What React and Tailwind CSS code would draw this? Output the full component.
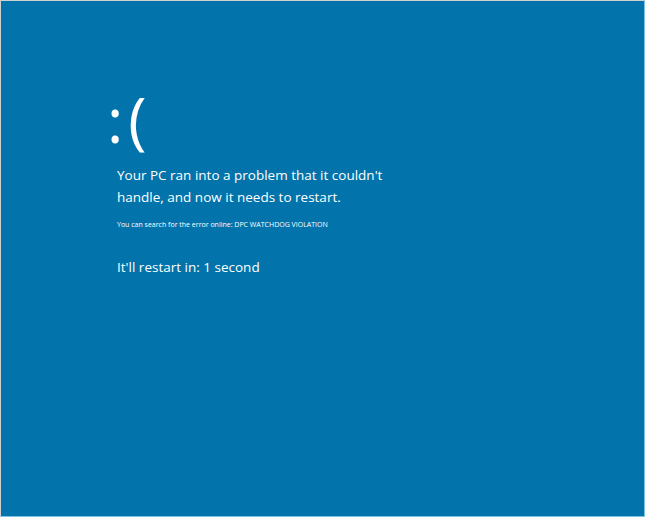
export default function App() {
  return (
    <div className="w-[645px] h-[517px] bg-[#0273ab] border-r border-b border-r-[#7cc3e6] border-b-[#7cc3e6] border-t border-l border-t-[#d0d0d0] border-l-[#d0d0d0] text-white font-['Open_Sans',sans-serif] overflow-hidden">
      <div className="pl-[106px] pt-[80px] flex flex-col">
        <div className="text-[62px] font-normal leading-[76px] tracking-[5px]">:(</div>
        <div className="pl-[10px] mt-[7px] text-[13.5px] leading-[22px] font-normal">
          <p>Your PC ran into a problem that it couldn't</p>
          <p>handle, and now it needs to restart.</p>
        </div>
        <p className="pl-[10px] mt-[12px] text-[7px] leading-[10px]">You can search for the error online: DPC WATCHDOG VIOLATION</p>
        <p className="pl-[10px] mt-[26px] text-[13.5px] leading-[22px]">It'll restart in: 1 second</p>
      </div>
    </div>
  );
}
